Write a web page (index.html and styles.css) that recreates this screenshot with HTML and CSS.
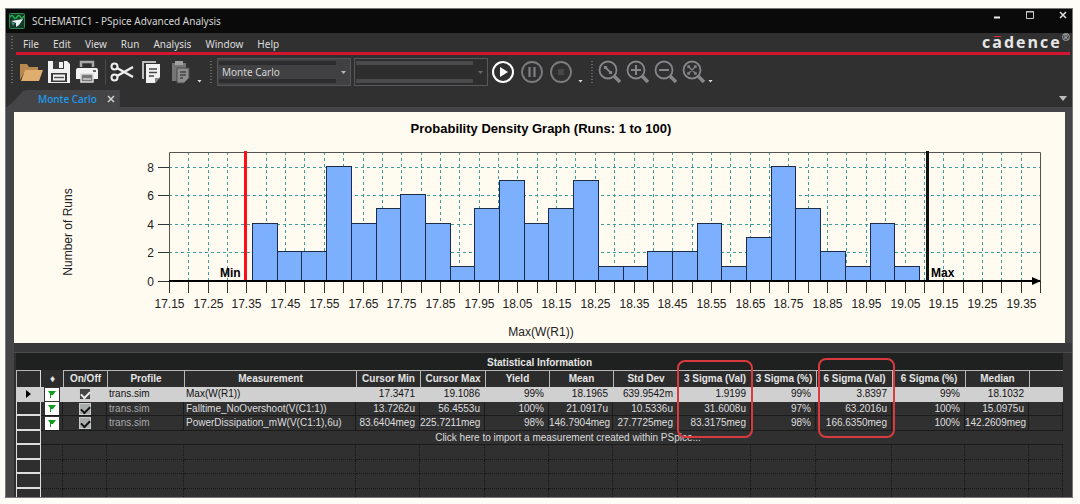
FILE: index.html
```html
<!DOCTYPE html>
<html lang="en">
<head>
<meta charset="utf-8">
<title>SCHEMATIC1 - PSpice Advanced Analysis</title>
<link rel="stylesheet" href="styles.css">
</head>
<body>
<div class="window">
  <header class="titlebar">
    <svg class="app-icon" viewBox="0 0 16 16"><rect x=".5" y=".5" width="15" height="15" rx="1" fill="#16382c" stroke="#2c8a4c"/><path d="M1 4q2-3 3.500 0t3.500 0t3.500 0t3.500-1" fill="none" stroke="#25b84f" stroke-width="1.500"/><path d="M2 8l12-2-4 6-3 2v-4z" fill="#e8f4f0"/><path d="M2 9l4 1-2 3z" fill="#4b8f86"/></svg>
    <h1 class="title">SCHEMATIC1 - PSpice Advanced Analysis</h1>
    <div class="window-buttons">
      <button type="button" aria-label="Minimize"><svg viewBox="0 0 10 10"><path d="M2 7.500h6" stroke="#eee" stroke-width="2"/></svg></button>
      <button type="button" aria-label="Maximize"><svg viewBox="0 0 10 10"><path d="M1.500 1.500h7v7h-7z" fill="none" stroke="#c8c8c8"/><path d="M1 2h8" stroke="#c8c8c8"/></svg></button>
      <button type="button" aria-label="Close"><svg viewBox="0 0 10 10"><path d="M2 2l6 6M8 2l-6 6" stroke="#ddd" stroke-width="1.600"/></svg></button>
    </div>
  </header>

  <div class="menubar">
    <span class="grip"></span>
    <nav class="menu">
      <button type="button">File</button><button type="button">Edit</button><button type="button">View</button><button type="button">Run</button><button type="button">Analysis</button><button type="button">Window</button><button type="button">Help</button>
    </nav>
    <div class="brand"><span>c</span><span class="macron">a</span><span>d</span><span>e</span><span>n</span><span>c</span><span>e</span><sup>®</sup></div>
  </div>

  <div class="toolbar">
    <span class="grip tall"></span>
    <div class="tools files">
      <button type="button" aria-label="Open"><svg viewBox="0 0 24 24"><path d="M1 20V4h7l2 3h9v4H6z" fill="#b98a50"/><path d="M6 10h18l-4 11H2z" fill="#dfae6e"/></svg></button>
      <button type="button" aria-label="Save"><svg viewBox="0 0 24 24"><path d="M1 1h19l3 3v19H1z" fill="#f2f2f2"/><path d="M6 1h11v8H6z" fill="#3a3a3a"/><path d="M12 2h4v6h-4z" fill="#f2f2f2"/><path d="M4 13h16v9H4z" fill="#3a3a3a"/><path d="M6 14.500h12v6H6z" fill="#f2f2f2"/><path d="M7 17.500h10" stroke="#555" stroke-width="1.500"/></svg></button>
      <button type="button" aria-label="Print"><svg viewBox="0 0 24 24"><path d="M6 7V2h12v5" fill="none" stroke="#a8a8a8" stroke-width="2.500"/><path d="M3 8h18q2 0 2 2v9h-5v-4H6v4H1v-9q0-2 2-2z" fill="#f2f2f2"/><path d="M6 14h12v8H6z" fill="#777" stroke="#ddd" stroke-width="1.500"/><path d="M8 19h8" stroke="#ccc" stroke-width="1.500"/><path d="M18 11h3" stroke="#333" stroke-width="1.500"/></svg></button>
    </div>
    <span class="separator"></span>
    <div class="tools edit">
      <button type="button" aria-label="Cut"><svg viewBox="0 0 24 24" fill="none" stroke="#f0f0f0"><circle cx="4.500" cy="6.500" r="3" stroke-width="2"/><circle cx="4.500" cy="17.500" r="3" stroke-width="2"/><path d="M7 8l16 9M7 16l16-9" stroke-width="2.500"/></svg></button>
      <button type="button" aria-label="Copy"><svg viewBox="0 0 24 24"><path d="M4 19V2h13" fill="none" stroke="#bdbdbd" stroke-width="2"/><path d="M7 4h14v13l-5 6H7z" fill="#f2f2f2"/><path d="M10 9h8M10 12.500h8M10 16h5" stroke="#444" stroke-width="1.500"/><path d="M16 18h5l-5 5z" fill="#888"/></svg></button>
      <button type="button" aria-label="Paste" disabled><svg viewBox="0 0 24 24"><path d="M4 3h14v18H4z" fill="#757575"/><path d="M7 1h8v4H7z" fill="#a0a0a0"/><path d="M9 8h12v10l-5 5H9z" fill="#8d8d8d" stroke="#4a4a4a"/><path d="M12 12h6M12 15h6M12 18h3" stroke="#444" stroke-width="1.500"/></svg></button>
    </div>
    <span class="overflow"></span>
    <span class="grip tall middle"></span>
    <span class="picker"><select aria-label="Analysis type"><option>Monte Carlo</option></select></span>
    <span class="picker idle"><select aria-label="Variant" disabled><option></option></select></span>
    <div class="tools run">
      <button type="button" aria-label="Run"><svg viewBox="0 0 24 24"><circle cx="12" cy="12" r="10" fill="none" stroke="#fff" stroke-width="2"/><path d="M9 7l8 5-8 5z" fill="#fff"/></svg></button>
      <button type="button" aria-label="Pause" disabled><svg viewBox="0 0 24 24" fill="none" stroke="#7d7d80"><circle cx="12" cy="12" r="10" stroke-width="1.800"/><path d="M9.500 7v10M14.500 7v10" stroke-width="2.200"/></svg></button>
      <button type="button" aria-label="Stop" disabled><svg viewBox="0 0 24 24"><circle cx="12" cy="12" r="10" fill="none" stroke="#7d7d80" stroke-width="1.800"/><path d="M9 9h6v6H9z" fill="#484849"/></svg></button>
    </div>
    <span class="overflow"></span>
    <span class="grip tall late"></span>
    <div class="tools zoom">
      <button type="button" aria-label="Zoom area" disabled><svg viewBox="0 0 24 24" fill="none" stroke="#85858a"><circle cx="10" cy="10" r="8.500" stroke-width="1.800"/><path d="M16 16l6 6" stroke-width="3.500"/><path d="M7 7l6 6" stroke-width="1.800"/><path d="M6 6h3v3H6zM11 11h3v3h-3z" fill="#85858a" stroke="none"/></svg></button>
      <button type="button" aria-label="Zoom in" disabled><svg viewBox="0 0 24 24" fill="none" stroke="#85858a"><circle cx="10" cy="10" r="8.500" stroke-width="1.800"/><path d="M16 16l6 6" stroke-width="3.500"/><path d="M5 10h10M10 5v10" stroke-width="2"/></svg></button>
      <button type="button" aria-label="Zoom out" disabled><svg viewBox="0 0 24 24" fill="none" stroke="#85858a"><circle cx="10" cy="10" r="8.500" stroke-width="1.800"/><path d="M16 16l6 6" stroke-width="3.500"/><path d="M5 10h10" stroke-width="2"/></svg></button>
      <button type="button" aria-label="Zoom to fit" disabled><svg viewBox="0 0 24 24" fill="none" stroke="#85858a"><circle cx="10" cy="10" r="8.500" stroke-width="1.800"/><path d="M16 16l6 6" stroke-width="3.500"/><path d="M6 8V6h2M12 6h2v2M14 12v2h-2M8 14H6v-2M7 7l6 6M13 7l-6 6" stroke-width="1.300"/></svg></button>
    </div>
    <span class="overflow"></span>
  </div>

  <div class="tabs">
    <div class="tab"><button type="button" class="tab-name">Monte Carlo</button><button type="button" class="tab-close" aria-label="Close tab"><svg viewBox="0 0 8 8"><path d="M1 1l6 6M7 1l-6 6" stroke="#d0d0d0" stroke-width="1.500"/></svg></button></div>
    <button type="button" class="tab-list" aria-label="Tab list"><svg viewBox="0 0 8 5"><path d="M0 0h8l-4 5z" fill="#bdbdbd"/></svg></button>
  </div>

  <main class="workspace">
    <svg class="chart" id="chart" viewBox="14 112 1051 231" role="img" aria-label="Probability Density Graph">
      <text class="chart-title" x="541" y="133">Probability Density Graph (Runs: 1 to 100)</text>
      <text class="axis-title" transform="translate(72 232) rotate(-90)">Number of Runs</text>
      <text class="axis-title" x="541" y="336">Max(W(R1))</text>
      <g id="grid"></g>
      <path class="frame" d="M169.500 281V152.500H1040.500V281"/>
      <g id="bars"></g>
      <g id="ticks"></g>
      <path d="M169 281h871" stroke="#000" stroke-width="2"/>
      <path d="M1032 277l9 4-9 4z"/>
      <path d="M245.500 151v129" stroke="#fb1018" stroke-width="3"/>
      <path d="M927.500 151v129" stroke="#111" stroke-width="3"/>
      <text class="limit" x="220" y="277">Min</text>
      <text class="limit" x="931" y="277">Max</text>
    </svg>

    <section class="results">
      <table>
        <caption>Statistical Information</caption>
        <colgroup><col class="c-row"><col class="c-flag"><col class="c-on"><col class="c-profile"><col class="c-measure"><col class="c-narrow"><col class="c-mid"><col class="c-narrow"><col class="c-narrow"><col class="c-mid"><col class="c-wide"><col class="c-mid"><col class="c-widest"><col class="c-wide"><col class="c-narrow"><col class="c-rest"></colgroup>
        <thead>
          <tr><th></th><th class="flag-head">♦</th><th>On/Off</th><th>Profile</th><th>Measurement</th><th>Cursor Min</th><th>Cursor Max</th><th>Yield</th><th>Mean</th><th>Std Dev</th><th class="marked">3 Sigma (Val)<span class="marker"></span></th><th>3 Sigma (%)</th><th class="marked">6 Sigma (Val)<span class="marker large"></span></th><th>6 Sigma (%)</th><th>Median</th><th></th></tr>
        </thead>
        <tbody>
          <tr class="selected"><th><svg class="pointer" viewBox="0 0 5 8"><path d="M0 0l5 4-5 4z"/></svg></th><td class="flag"><svg viewBox="0 0 8 9"><path d="M0 1h8L5 5H3v3H2V4z" fill="#129d22"/></svg></td><td class="on"><input type="checkbox" aria-label="Max(W(R1)) on" checked></td><td class="name">trans.sim</td><td class="name">Max(W(R1))</td><td>17.3471</td><td>19.1086</td><td>99%</td><td>18.1965</td><td>639.9542m</td><td>1.9199</td><td>99%</td><td>3.8397</td><td>99%</td><td>18.1032</td><td></td></tr>
          <tr><th></th><td class="flag"><svg viewBox="0 0 8 9"><path d="M0 1h8L5 5H3v3H2V4z" fill="#129d22"/></svg></td><td class="on"><input type="checkbox" aria-label="Falltime_NoOvershoot on" checked></td><td class="name dim">trans.sim</td><td class="name">Falltime_NoOvershoot(V(C1:1))</td><td>13.7262u</td><td>56.4553u</td><td>100%</td><td>21.0917u</td><td>10.5336u</td><td>31.6008u</td><td>97%</td><td>63.2016u</td><td>100%</td><td>15.0975u</td><td></td></tr>
          <tr><th></th><td class="flag"><svg viewBox="0 0 8 9"><path d="M0 1h8L5 5H3v3H2V4z" fill="#129d22"/></svg></td><td class="on"><input type="checkbox" aria-label="PowerDissipation_mW on" checked></td><td class="name dim">trans.sim</td><td class="name">PowerDissipation_mW(V(C1:1),6u)</td><td>83.6404meg</td><td>225.7211meg</td><td>98%</td><td>146.7904meg</td><td>27.7725meg</td><td>83.3175meg</td><td>98%</td><td>166.6350meg</td><td>100%</td><td>142.2609meg</td><td></td></tr>
          <tr class="import"><th></th><td colspan="15">Click here to import a measurement created within PSpice...</td></tr>
          <tr class="empty"><th></th><td></td><td></td><td></td><td></td><td></td><td></td><td></td><td></td><td></td><td></td><td></td><td></td><td></td><td></td><td></td></tr>
          <tr class="empty"><th></th><td></td><td></td><td></td><td></td><td></td><td></td><td></td><td></td><td></td><td></td><td></td><td></td><td></td><td></td><td></td></tr>
          <tr class="empty"><th></th><td></td><td></td><td></td><td></td><td></td><td></td><td></td><td></td><td></td><td></td><td></td><td></td><td></td><td></td><td></td></tr>
          <tr class="empty last"><th></th><td></td><td></td><td></td><td></td><td></td><td></td><td></td><td></td><td></td><td></td><td></td><td></td><td></td><td></td><td></td></tr>
        </tbody>
      </table>
    </section>
  </main>
</div>
<script src="chart.js"></script>
</body>
</html>
```
FILE: styles.css
```css
* { box-sizing: border-box; }
body { margin: 0; padding: 8px 7px 7px 5px; background: #fdfcf6; font-family: "Noto Sans", "Open Sans", sans-serif; font-size: 10px; color: #dcdcdc; }
button { margin: 0; padding: 0; border: 0; background: none; color: inherit; font: inherit; }
svg { display: block; }

.window { border: 1px solid #77777a; background: #303031; }

.titlebar { display: flex; align-items: center; height: 24px; padding: 0 4px 0 3px; background: #0a0a0a; }
.app-icon { width: 16px; height: 16px; }
.title { margin: 0 0 0 7px; font-size: 10px; font-weight: 400; color: #d4d4d4; }
.window-buttons { display: flex; gap: 23px; margin-left: auto; align-self: flex-start; }
.window-buttons svg { width: 10px; height: 12px; }

.menubar { display: flex; align-items: center; height: 22px; margin: 0 2px 0 10px; border-bottom: 3px solid #d3152f; }
.grip { width: 2px; height: 14px; margin-left: -5px; background: repeating-linear-gradient(#67676a 0 1px, transparent 1px 3px); }
.grip.tall { height: 22px; margin-left: 0; }
.menu { display: flex; gap: 14px; margin-left: 10px; padding-top: 2px; }
.brand { display: flex; margin-left: auto; gap: 2px; font: 700 16px/19px "Open Sans", sans-serif; color: #e6e6e6; }
.brand sup { font-size: 10px; line-height: 8px; color: #bbb; }
.macron { background: linear-gradient(#e03040, #e03040) center 3px / 7px 1px no-repeat; }

.toolbar { display: flex; align-items: center; height: 35px; padding: 0 0 1px 5px; }
.tools { display: flex; gap: 5px; }
.tools svg { width: 24px; height: 24px; }
.tools.files { gap: 4px; margin-left: 6px; }
.separator { width: 1px; height: 26px; margin: 0 4px 0 6px; background: #48484b; }
.run { margin-left: 3px; }
.overflow { width: 5px; height: 3px; margin: 18px 0 0 5px; background: #ddd; clip-path: polygon(0 0, 100% 0, 50% 100%); }
.grip.middle, .grip.late { margin-left: 8px; }
.grip.late { margin-right: 5px; }
.zoom { margin-right: -3px; }
.zoom .overflow { margin-left: 3px; }
.tools.zoom { gap: 4px; }
.picker { position: relative; width: 134px; height: 28px; margin-left: 5px; }
.picker.idle { margin-left: 3px; }
.picker select { appearance: none; width: 100%; height: 100%; padding: 0 4px; border: 1px solid #58585a; border-radius: 0; background: linear-gradient(#2c2c2d, #2c2c2d) 1px 2px / 117px 4px no-repeat, linear-gradient(#2c2c2d, #2c2c2d) 1px 20px / 117px 4px no-repeat, #414143; color: #d6d6d6; font: inherit; opacity: 1; }
.picker.idle select { background: linear-gradient(#4a4a4c, #4a4a4c) 1px 2px / 117px 4px no-repeat, linear-gradient(#4a4a4c, #4a4a4c) 1px 20px / 117px 4px no-repeat, #2e2e2f; }
.picker::after { content: ""; position: absolute; right: 5px; top: 13px; width: 5px; height: 3px; background: #b8b8b8; clip-path: polygon(0 0, 100% 0, 50% 100%); }
.picker.idle::after { background: #6a6a6c; }

.tabs { display: flex; justify-content: space-between; align-items: center; height: 17px; padding: 0 5px 0 1px; }
.tab { display: flex; align-items: center; gap: 10px; height: 17px; padding: 0 5px 0 31px; background: #454548; clip-path: polygon(0 100%, 6px 70%, 16px 6%, 20px 0, 100% 0, 100% 100%); }
.tab-name { color: #1c9df0; font-weight: 500; }
.tab-close svg { width: 8px; height: 8px; }
.tab-list svg { width: 8px; height: 5px; }

.workspace { padding: 5px 7px 0 8px; background: #454548; }
.chart { width: 100%; height: auto; background: #fffbf0; font-family: "Liberation Sans", Arial, sans-serif; }
.chart text { fill: #222; text-anchor: middle; }
.chart .chart-title { font-size: 13px; font-weight: 700; fill: #000; }
.chart .axis-title { font-size: 12px; }
.chart .tick-label { font-size: 12px; }
.chart .tick-label.side { text-anchor: end; }
.chart .limit { font-size: 12px; font-weight: 700; fill: #000; text-anchor: start; }
.frame { fill: none; stroke: #55554f; }
.grid-line { stroke: #3f9c9c; stroke-dasharray: 3 3; }
.bar { fill: #7cb0ff; stroke: #1c2c48; }
.tick { stroke: #333; }

.results { margin: 0 -7px 0 0; padding: 10px 9px 0 2px; background: linear-gradient(#38383b 9px, #4a4a4d 9px 10px, #303031 10px); }
table { width: 100%; table-layout: fixed; border-collapse: separate; border-spacing: 0; font: 10px/12px "Liberation Sans", Arial, sans-serif; }
caption { height: 17px; background: #1e211f; color: #e4e4e4; font-weight: 700; line-height: 19px; }
.c-row { width: 25px; }
.c-flag { width: 22px; }
.c-on { width: 44px; }
.c-profile { width: 77px; }
.c-measure { width: 172px; }
.c-narrow { width: 64px; }
.c-mid { width: 65px; }
.c-wide { width: 73px; }
.c-widest { width: 76px; }
.c-rest { width: 34px; }
th, td { padding: 0; white-space: nowrap; }
thead th { height: 17px; border-top: 1px solid #b8b8b8; border-left: 1px solid #b8b8b8; background: #2c2c2d; color: #e4e4e4; }
thead .flag-head { border-color: transparent; font-weight: 400; }
thead th:first-child { border-right: 1px solid #ddd; }
tbody tr { height: 15px; }
tbody tr:nth-child(even) { height: 14px; }
tbody th { border: 1px solid #ddd; border-bottom-width: 2px; border-top-width: 0; background: #2e2e2f; }
tbody td { padding-right: 4px; border-right: 1px solid #1b1b1b; border-bottom: 1px solid #1b1b1b; text-align: right; color: #dedede; }
tbody .name { padding: 0 0 0 2px; text-align: left; }
tbody .dim { color: #aaa; }
tbody .selected th, tbody .selected td { border-color: #d0d0d0; background: #d0d0d0; color: #111; }
.pointer { width: 5px; height: 8px; margin: auto; }
tbody .flag { padding: 0; }
.flag svg { width: 14px; height: 13px; margin-left: 4px; padding: 2px 3px; background: #fff; }
.selected .flag svg { outline: 1px solid #333; }
tbody .on { padding: 0; text-align: center; }
.on input { appearance: none; display: block; width: 12px; height: 12px; margin: 0 auto; border: 1px solid #ccc; background: #a9aeac; }
.selected input { background: #444; }
.on input::before { content: ""; display: block; width: 7px; height: 4px; margin: 2px 1px; border: solid #111; border-width: 0 0 2px 2px; rotate: -45deg; }
.selected input::before { border-color: #eee; }
tbody .import td { padding-left: 36px; text-align: center; border-right: 0; }
tbody .empty td { padding: 0; border-right: 1px dotted #161616; border-bottom: 1px dotted #161616; }
tbody tr.last:nth-child(even) { height: 8px; }
tbody .last th, tbody tr.last td { border-bottom: 0; }
.marked { position: relative; }
.marker { position: absolute; top: -11px; left: -2px; right: -2px; height: 78px; border: 2px solid #d83a3e; border-radius: 8px; }
.marker.large { top: -13px; left: 1px; right: -3px; height: 80px; }
```
FILE: chart.js
```js
const runs = [4, 2, 2, 8, 4, 5, 6, 4, 1, 5, 7, 4, 5, 7, 1, 1, 2, 2, 4, 1, 3, 8, 5, 2, 1, 4, 1];
const plot = { left: 169, right: 1040, top: 152, base: 281 };
const tickStep = (plot.right - plot.left) / 45;
const unit = 14.3;
const barStart = 252;
const barStep = 24.7;

function add(parent, tag, attributes, text) {
  const node = document.createElementNS("http://www.w3.org/2000/svg", tag);
  for (const key in attributes) node.setAttribute(key, attributes[key]);
  if (text) node.textContent = text;
  document.getElementById(parent).appendChild(node);
}

for (let i = 0; i <= 45; i++) {
  const x = Math.round(plot.left + i * tickStep) + 0.5;
  if (i > 0 && i < 45) add("grid", "path", { class: "grid-line", d: `M${x} ${plot.top}V${plot.base}` });
  add("ticks", "path", { class: "tick", d: `M${x} ${plot.base}v12` });
  if (i % 2 === 0) add("ticks", "text", { class: "tick-label", x, y: 308 }, (17.15 + i * 0.05).toFixed(2));
}

for (let value = 0; value <= 8; value += 2) {
  const y = Math.round(plot.base - value * unit) + 0.5;
  if (value) add("grid", "path", { class: "grid-line", d: `M${plot.left} ${y}H${plot.right}` });
  add("ticks", "path", { class: "tick", d: `M158 ${y}h11` });
  add("ticks", "text", { class: "tick-label side", x: 154, y: y + 4 }, String(value));
}

runs.forEach((count, i) => {
  const x = Math.round(barStart + i * barStep) + 0.5;
  const next = Math.round(barStart + (i + 1) * barStep) + 0.5;
  const height = Math.round(count * unit);
  add("bars", "rect", { class: "bar", x, y: plot.base - height - 0.5, width: next - x, height });
});
```
